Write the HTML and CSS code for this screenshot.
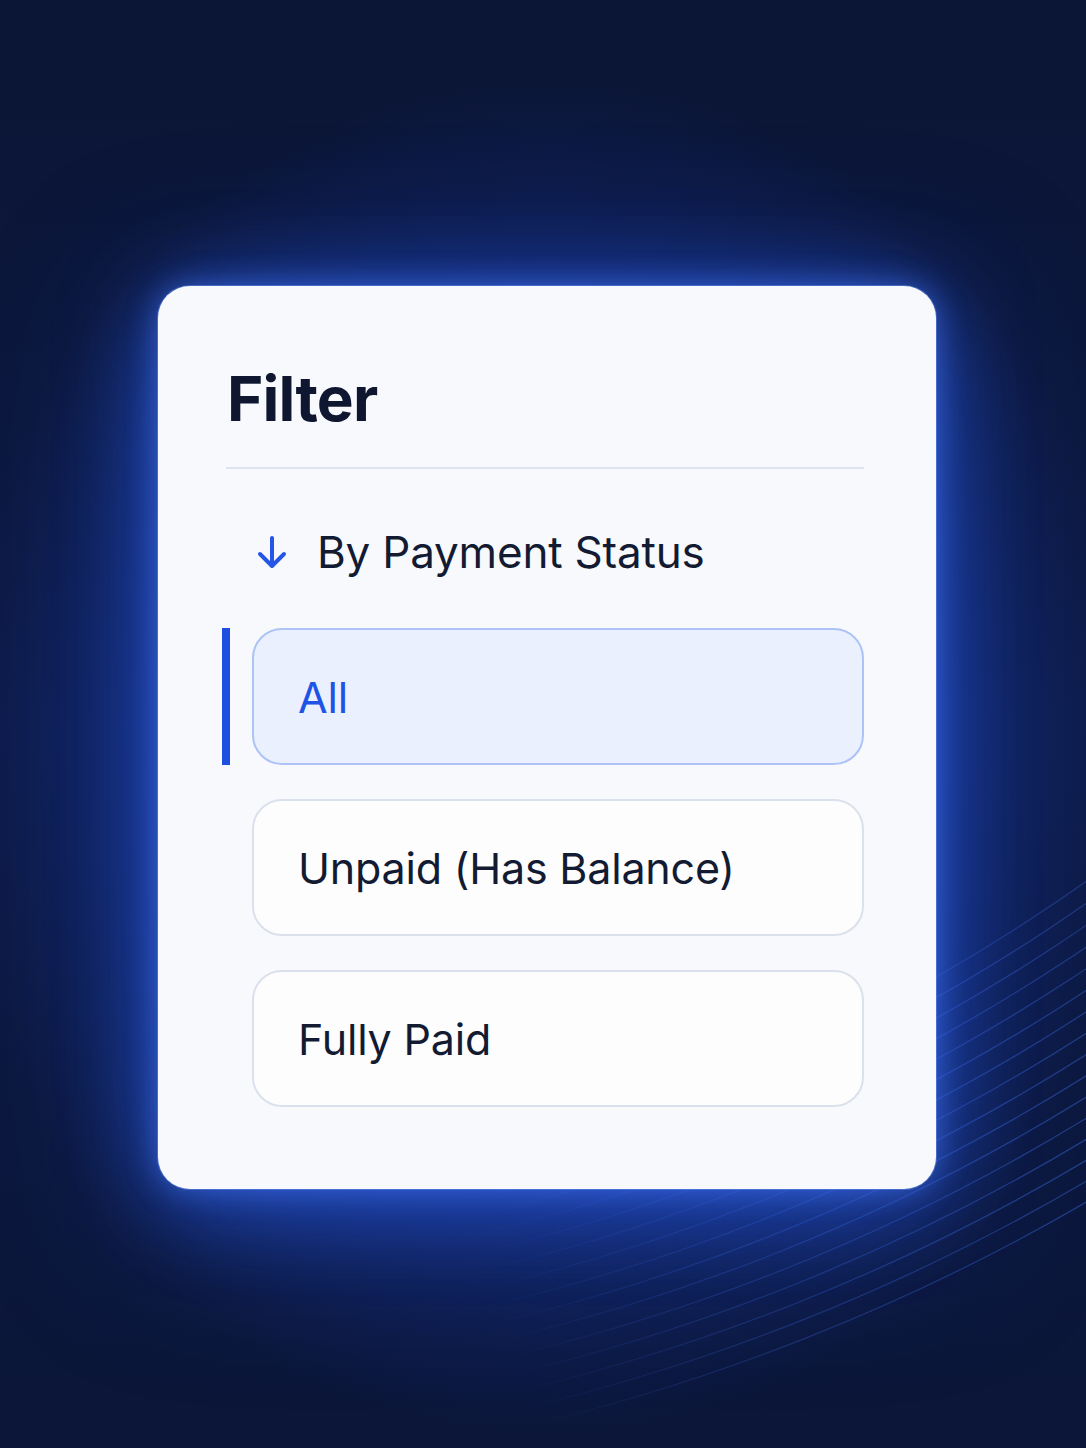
FILE: index.html
```html
<!DOCTYPE html>
<html lang="en">
<head>
<meta charset="utf-8">
<title>Filter</title>
<link rel="stylesheet" href="styles.css">
</head>
<body>
<div class="stage">
  <svg class="lines" width="1086" height="1448" viewBox="0 0 1086 1448" aria-hidden="true">
    <defs>
      <radialGradient id="fade" cx="1086" cy="1150" r="620" gradientUnits="userSpaceOnUse">
        <stop offset="0" stop-color="#3a68e0" stop-opacity="0.5"/>
        <stop offset="0.6" stop-color="#3a68e0" stop-opacity="0.28"/>
        <stop offset="1" stop-color="#3a68e0" stop-opacity="0"/>
      </radialGradient>
    </defs>
    <g fill="none" stroke="url(#fade)" stroke-width="1.2">
      <circle cx="45" cy="-587" r="1800"/>
      <circle cx="45" cy="-587" r="1818"/>
      <circle cx="45" cy="-587" r="1836"/>
      <circle cx="45" cy="-587" r="1854"/>
      <circle cx="45" cy="-587" r="1872"/>
      <circle cx="45" cy="-587" r="1890"/>
      <circle cx="45" cy="-587" r="1908"/>
      <circle cx="45" cy="-587" r="1926"/>
      <circle cx="45" cy="-587" r="1944"/>
      <circle cx="45" cy="-587" r="1962"/>
      <circle cx="45" cy="-587" r="1980"/>
      <circle cx="45" cy="-587" r="1998"/>
      <circle cx="45" cy="-587" r="2016"/>
      <circle cx="45" cy="-587" r="2034"/>
      <circle cx="45" cy="-587" r="2052"/>
      <circle cx="45" cy="-587" r="2070"/>
    </g>
  </svg>
  <section class="card">
    <h1 class="title">Filter</h1>
    <div class="divider"></div>
    <div class="group-head">
      <svg class="arrow" width="34" height="34" viewBox="0 0 34 34" aria-hidden="true">
        <path d="M17 3 V30 M5 19 L17 31 L29 19" fill="none" stroke="#2556e8" stroke-width="4" stroke-linecap="round" stroke-linejoin="round"/>
      </svg>
      <span class="group-label">By Payment Status</span>
    </div>
    <ul class="options">
      <li class="option active"><span class="marker"></span>All</li>
      <li class="option">Unpaid (Has Balance)</li>
      <li class="option">Fully Paid</li>
    </ul>
  </section>
</div>
</body>
</html>
```

FILE: styles.css
```css
html, body {
  margin: 0;
  padding: 0;
}

body {
  font-family: Inter, "Noto Sans", "Liberation Sans", sans-serif;
  background: #0b1636;
}

.stage {
  position: relative;
  width: 1086px;
  height: 1448px;
  overflow: hidden;
  box-sizing: border-box;
  padding: 286px 0 0 158px;
  background:
    radial-gradient(ellipse 600px 680px at 547px 760px, rgba(30, 72, 200, 0.8) 0%, rgba(22, 54, 160, 0.5) 50%, rgba(12, 28, 80, 0) 100%),
    linear-gradient(180deg, #0b1535 0%, #0d1a44 50%, #0b1638 100%);
}

.lines {
  position: absolute;
  left: 0;
  top: 0;
}

.card {
  position: relative;
  width: 778px;
  height: 903px;
  box-sizing: border-box;
  padding: 75px 72px 0 68px;
  background: #f8f9fc;
  border-radius: 32px;
  box-shadow:
    0 0 0 1px rgba(120, 160, 255, 0.4),
    0 0 30px rgba(70, 120, 250, 0.6),
    0 10px 90px rgba(45, 95, 230, 0.65),
    0 30px 160px rgba(35, 80, 210, 0.5);
}

.title {
  margin: 0 0 0 1px;
  font-size: 62px;
  line-height: 76px;
  font-weight: 700;
  color: #0e1630;
  letter-spacing: -0.8px;
}

.divider {
  margin-top: 30px;
  height: 2px;
  background: #dfe5f0;
}

.group-head {
  display: flex;
  align-items: center;
  gap: 28px;
  margin: 48px 0 0 29px;
  height: 70px;
}

.arrow {
  display: block;
  flex: none;
}

.group-label {
  font-size: 44px;
  color: #131b33;
  letter-spacing: -0.2px;
}

.options {
  list-style: none;
  margin: 41px 0 0 26px;
  padding: 0;
  display: flex;
  flex-direction: column;
  gap: 34px;
}

.option {
  position: relative;
  height: 137px;
  box-sizing: border-box;
  display: flex;
  align-items: center;
  padding-left: 44px;
  border: 2px solid #dbe1ec;
  border-radius: 30px;
  background: #fdfdfe;
  font-size: 43px;
  color: #131b33;
  letter-spacing: -0.2px;
}

.option.active {
  background: #eaf0fd;
  border-color: #adc3f6;
  color: #2152e6;
}

.marker {
  position: absolute;
  left: -32px;
  top: -2px;
  width: 8px;
  height: 137px;
  background: #1f4fe0;
}
```
